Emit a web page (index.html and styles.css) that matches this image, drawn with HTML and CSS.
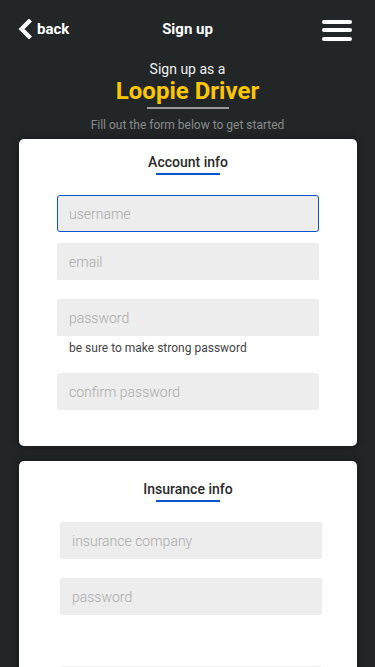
FILE: index.html
```html
<!DOCTYPE html>
<html>
<head>
<meta charset="utf-8">
<link rel="stylesheet" href="styles.css">
</head>
<body>
<header class="topbar">
  <a class="back">
    <svg class="chev" width="14" height="20" viewBox="0 0 14 20"><polyline points="11,2.5 3.5,10 11,17.5" fill="none" stroke="#fff" stroke-width="4.2" stroke-linecap="square"/></svg>
    <span>back</span>
  </a>
  <div class="title">Sign up</div>
  <div class="burger"><i></i><i></i><i></i></div>
</header>
<section class="hero">
  <div class="as">Sign up as a</div>
  <div class="brand">Loopie Driver</div>
  <div class="rule"></div>
  <div class="sub">Fill out the form below to get started</div>
</section>
<main class="cards">
  <div class="card card-account">
    <h2 class="card-title">Account info</h2>
    <div class="fields">
      <div class="field focused">username</div>
      <div class="field">email</div>
      <div class="field gap">password</div>
      <div class="hint">be sure to make strong password</div>
      <div class="field after-hint">confirm password</div>
    </div>
  </div>
  <div class="card card-ins">
    <h2 class="card-title">Insurance info</h2>
    <div class="fields shifted">
      <div class="field">insurance company</div>
      <div class="field gap">password</div>
      <div class="field bigGap"></div>
    </div>
  </div>
</main>
</body>
</html>
```
FILE: styles.css
```css
* { box-sizing: border-box; }
html, body { margin: 0; padding: 0; }
body {
  background: #222627;
  font-family: Roboto, "Noto Sans", sans-serif;
  width: 375px;
  height: 667px;
  overflow: hidden;
}
.topbar {
  height: 58px;
  display: flex;
  align-items: center;
  justify-content: space-between;
  padding: 0 23px 0 19px;
  position: relative;
}
.back {
  display: flex;
  align-items: center;
  gap: 5px;
  color: #fff;
  font-weight: 700;
  font-size: 15px;
}
.chev { display: block; margin-left: -1px; }
.title {
  position: absolute;
  left: 0; right: 0;
  text-align: center;
  color: #fff;
  font-weight: 700;
  font-size: 15px;
  pointer-events: none;
}
.burger {
  width: 30px;
  display: flex;
  flex-direction: column;
  gap: 4.5px;
  margin-top: 2px;
}
.burger i {
  display: block;
  height: 4px;
  background: #fff;
  border-radius: 2px;
}
.hero {
  display: flex;
  flex-direction: column;
  align-items: center;
  padding-top: 3px;
}
.as {
  color: #f0f0f0;
  font-size: 14px;
  line-height: 16px;
}
.brand {
  color: #fec600;
  font-weight: 700;
  font-size: 24px;
  line-height: 28px;
}
.rule {
  width: 82px;
  height: 2px;
  background: #9a9a9a;
  margin-top: 2px;
}
.sub {
  color: #8a8a8a;
  font-size: 12px;
  line-height: 14px;
  margin-top: 9px;
}
.cards {
  display: flex;
  flex-direction: column;
  gap: 15px;
  padding: 7px 18px 0 19px;
}
.card {
  background: #fff;
  border-radius: 5px;
  box-shadow: 0 0 10px rgba(0,0,0,0.45);
  display: flex;
  flex-direction: column;
  align-items: center;
}
.card-account { padding: 15px 0 36px; }
.card-ins { padding: 20px 0 0; }
.card-title {
  margin: 0;
  font-size: 14px;
  line-height: 16px;
  font-weight: 500;
  color: #2a2a2a;
}
.card-title::after {
  content: "";
  display: block;
  width: 64px;
  height: 2px;
  background: #0a55cc;
  margin: 3px auto 0;
}
.fields {
  width: 262px;
  margin-top: 20px;
  display: flex;
  flex-direction: column;
}
.shifted { margin-top: 20px; margin-left: 6px; }
.field {
  height: 37px;
  background: #ededed;
  border-radius: 3px;
  color: #aaa;
  font-size: 14px;
  font-weight: 300;
  display: flex;
  align-items: center;
  padding-left: 12px;
  margin-top: 11px;
}
.field:first-child { margin-top: 0; }
.field.focused { border: 1px solid #0a55cc; padding-left: 11px; }
.field.gap { margin-top: 19px; }
.field.bigGap { margin-top: 51px; }
.hint {
  font-size: 12px;
  font-weight: 400;
  color: #444;
  padding-left: 12px;
  margin-top: 5px;
  line-height: 14px;
}
.field.after-hint { margin-top: 18px; }
```
